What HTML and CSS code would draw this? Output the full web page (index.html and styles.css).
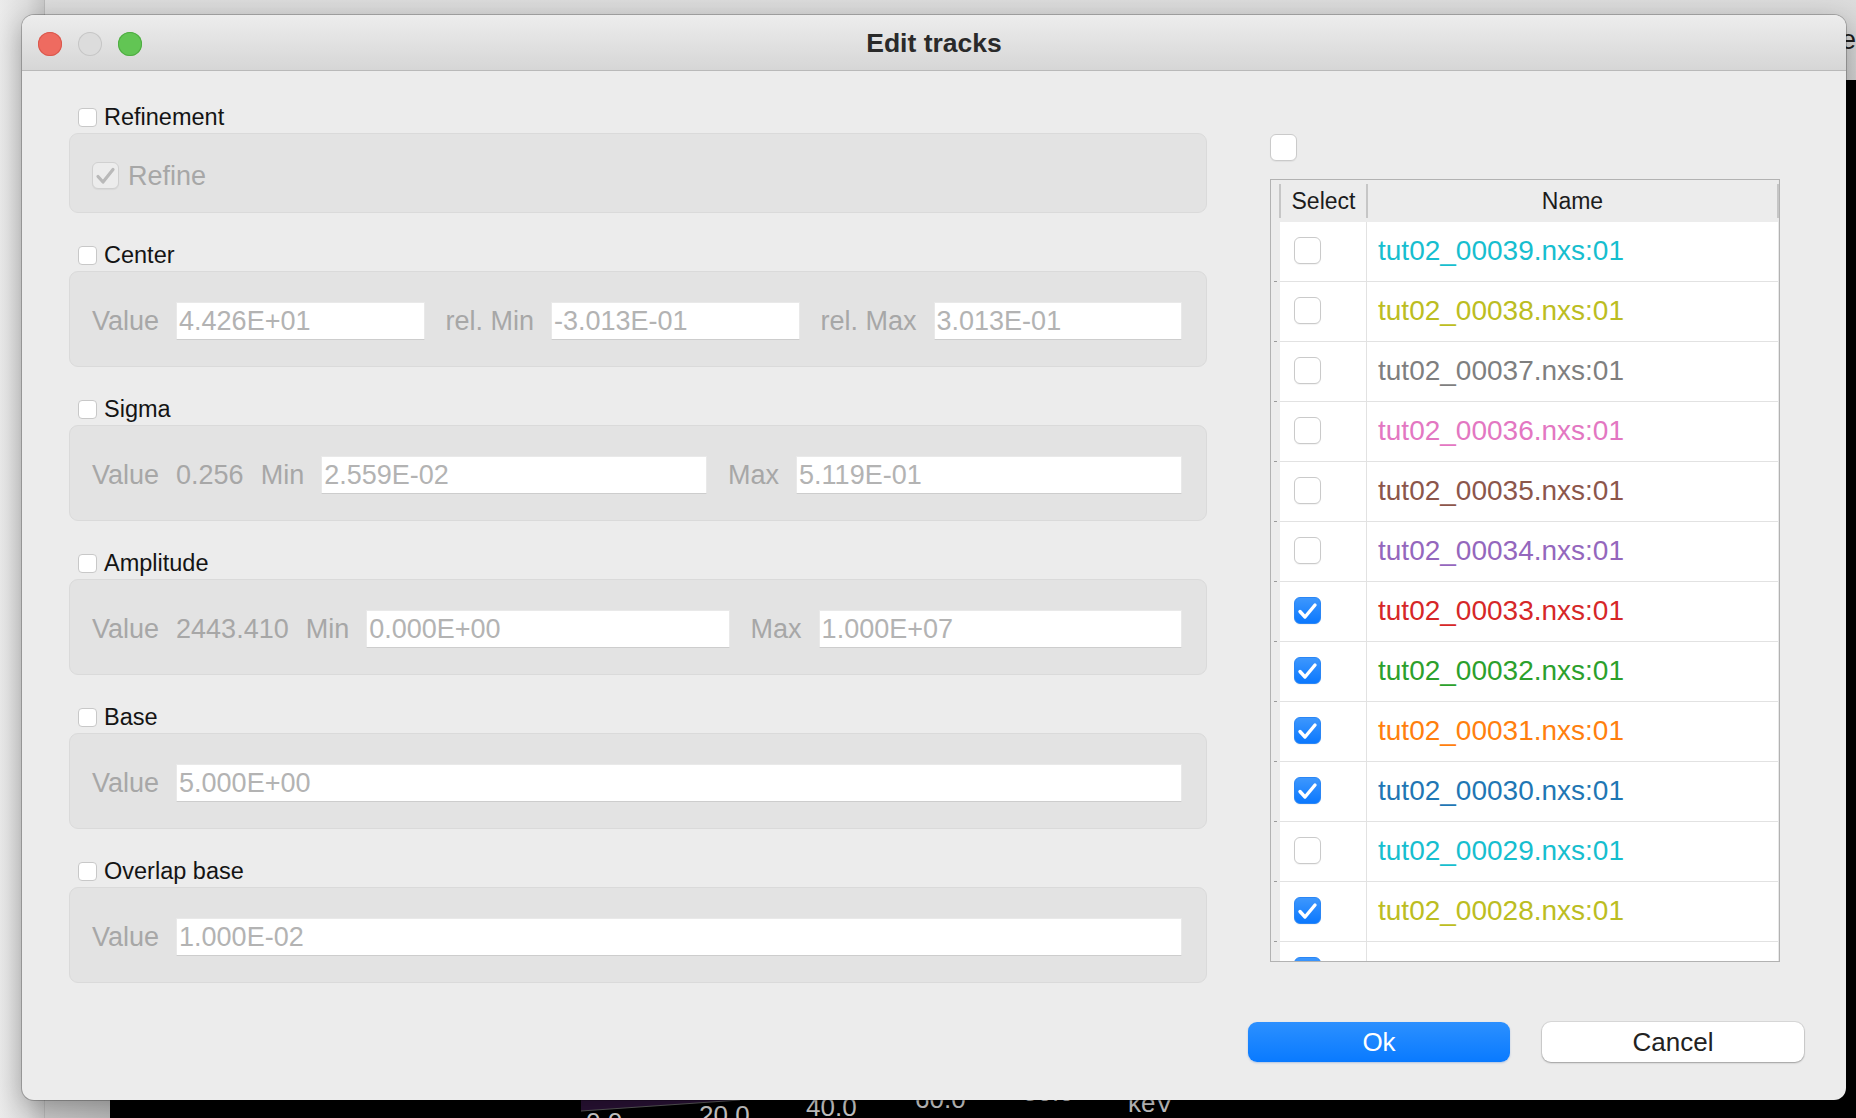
FILE: index.html
```html
<!DOCTYPE html>
<html>
<head>
<meta charset="utf-8">
<title>Edit tracks</title>
<link rel="stylesheet" href="styles.css">
</head>
<body>
<div class="desktop">
  <div class="side-strip"></div>
  <div class="back-window">
    <div class="back-title"><span class="back-title-text">e</span></div>
    <div class="back-body">
      <div class="back-sidebar"></div>
      <div class="plot">
        <svg class="plot-shape" width="160" height="13" viewBox="0 0 160 13"><polygon points="0,0 159,0 0,11" fill="#2a1236"/><line x1="0" y1="11" x2="159" y2="0" stroke="#5a5a5a" stroke-width="1"/></svg>
        <span class="tick tick-0">0.0</span>
        <span class="tick tick-20">20.0</span>
        <span class="tick tick-40">40.0</span>
        <span class="tick tick-60">60.0</span>
        <span class="tick tick-80">80.0</span>
        <span class="tick tick-kev">keV</span>
      </div>
    </div>
  </div>

  <div class="dialog">
    <div class="titlebar">
      <div class="lights">
        <span class="light red"></span>
        <span class="light gray"></span>
        <span class="light green"></span>
      </div>
      <div class="title">Edit tracks</div>
      <div></div>
    </div>

    <div class="content">
      <div class="params">
        <section class="group">
          <div class="group-title"><span class="cb-sm"></span><span>Refinement</span></div>
          <div class="group-box box-refine">
            <div class="refine-row">
              <span class="cb-lg cb-disabled"><svg width="27" height="27" viewBox="0 0 27 27"><path d="M6 14.5 L11 20 L21 7.5" fill="none" stroke="#b9b9b9" stroke-width="3.2" stroke-linecap="round" stroke-linejoin="round"/></svg></span>
              <span class="lbl">Refine</span>
            </div>
          </div>
        </section>

        <section class="group">
          <div class="group-title"><span class="cb-sm"></span><span>Center</span></div>
          <div class="group-box">
            <div class="row">
              <span class="lbl">Value</span>
              <div class="field">4.426E+01</div>
              <span class="lbl">rel. Min</span>
              <div class="field">-3.013E-01</div>
              <span class="lbl">rel. Max</span>
              <div class="field">3.013E-01</div>
            </div>
          </div>
        </section>

        <section class="group">
          <div class="group-title"><span class="cb-sm"></span><span>Sigma</span></div>
          <div class="group-box">
            <div class="row">
              <span class="lbl">Value</span>
              <span class="lbl">0.256</span>
              <span class="lbl">Min</span>
              <div class="field">2.559E-02</div>
              <span class="lbl">Max</span>
              <div class="field">5.119E-01</div>
            </div>
          </div>
        </section>

        <section class="group">
          <div class="group-title"><span class="cb-sm"></span><span>Amplitude</span></div>
          <div class="group-box">
            <div class="row">
              <span class="lbl">Value</span>
              <span class="lbl">2443.410</span>
              <span class="lbl">Min</span>
              <div class="field">0.000E+00</div>
              <span class="lbl">Max</span>
              <div class="field">1.000E+07</div>
            </div>
          </div>
        </section>

        <section class="group">
          <div class="group-title"><span class="cb-sm"></span><span>Base</span></div>
          <div class="group-box">
            <div class="row">
              <span class="lbl">Value</span>
              <div class="field">5.000E+00</div>
            </div>
          </div>
        </section>

        <section class="group">
          <div class="group-title"><span class="cb-sm"></span><span>Overlap base</span></div>
          <div class="group-box">
            <div class="row">
              <span class="lbl">Value</span>
              <div class="field">1.000E-02</div>
            </div>
          </div>
        </section>
      </div>

      <div class="tracks">
        <span class="cb-lg select-all"></span>
        <div class="table">
          <div class="trow thead">
            <div class="vh"></div>
            <div class="hcell">Select</div>
            <div class="hcell hcell-last">Name</div>
          </div>
          <div class="trow"><div class="vh"></div><div class="sel"><span class="cb-lg"></span></div><div class="name c-cyan">tut02_00039.nxs:01</div></div>
          <div class="trow"><div class="vh"></div><div class="sel"><span class="cb-lg"></span></div><div class="name c-olive">tut02_00038.nxs:01</div></div>
          <div class="trow"><div class="vh"></div><div class="sel"><span class="cb-lg"></span></div><div class="name c-gray">tut02_00037.nxs:01</div></div>
          <div class="trow"><div class="vh"></div><div class="sel"><span class="cb-lg"></span></div><div class="name c-pink">tut02_00036.nxs:01</div></div>
          <div class="trow"><div class="vh"></div><div class="sel"><span class="cb-lg"></span></div><div class="name c-brown">tut02_00035.nxs:01</div></div>
          <div class="trow"><div class="vh"></div><div class="sel"><span class="cb-lg"></span></div><div class="name c-purple">tut02_00034.nxs:01</div></div>
          <div class="trow"><div class="vh"></div><div class="sel"><span class="cb-lg cb-on"><svg width="27" height="27" viewBox="0 0 27 27"><path d="M6 14.5 L11 20 L21 8" fill="none" stroke="#fff" stroke-width="3.4" stroke-linecap="round" stroke-linejoin="round"/></svg></span></div><div class="name c-red">tut02_00033.nxs:01</div></div>
          <div class="trow"><div class="vh"></div><div class="sel"><span class="cb-lg cb-on"><svg width="27" height="27" viewBox="0 0 27 27"><path d="M6 14.5 L11 20 L21 8" fill="none" stroke="#fff" stroke-width="3.4" stroke-linecap="round" stroke-linejoin="round"/></svg></span></div><div class="name c-green">tut02_00032.nxs:01</div></div>
          <div class="trow"><div class="vh"></div><div class="sel"><span class="cb-lg cb-on"><svg width="27" height="27" viewBox="0 0 27 27"><path d="M6 14.5 L11 20 L21 8" fill="none" stroke="#fff" stroke-width="3.4" stroke-linecap="round" stroke-linejoin="round"/></svg></span></div><div class="name c-orange">tut02_00031.nxs:01</div></div>
          <div class="trow"><div class="vh"></div><div class="sel"><span class="cb-lg cb-on"><svg width="27" height="27" viewBox="0 0 27 27"><path d="M6 14.5 L11 20 L21 8" fill="none" stroke="#fff" stroke-width="3.4" stroke-linecap="round" stroke-linejoin="round"/></svg></span></div><div class="name c-blue">tut02_00030.nxs:01</div></div>
          <div class="trow"><div class="vh"></div><div class="sel"><span class="cb-lg"></span></div><div class="name c-cyan">tut02_00029.nxs:01</div></div>
          <div class="trow"><div class="vh"></div><div class="sel"><span class="cb-lg cb-on"><svg width="27" height="27" viewBox="0 0 27 27"><path d="M6 14.5 L11 20 L21 8" fill="none" stroke="#fff" stroke-width="3.4" stroke-linecap="round" stroke-linejoin="round"/></svg></span></div><div class="name c-olive">tut02_00028.nxs:01</div></div>
          <div class="trow"><div class="vh"></div><div class="sel"><span class="cb-lg cb-on"><svg width="27" height="27" viewBox="0 0 27 27"><path d="M6 14.5 L11 20 L21 8" fill="none" stroke="#fff" stroke-width="3.4" stroke-linecap="round" stroke-linejoin="round"/></svg></span></div><div class="name c-gray">tut02_00027.nxs:01</div></div>
        </div>
      </div>
    </div>

    <div class="footer">
      <button class="btn btn-primary">Ok</button>
      <button class="btn">Cancel</button>
    </div>
  </div>
</div>
</body>
</html>
```
FILE: styles.css
```css
* { box-sizing: border-box; }
html, body { margin: 0; padding: 0; }
body {
  width: 1856px;
  height: 1118px;
  overflow: hidden;
  font-family: "Liberation Sans", Arial, sans-serif;
  background: #d6d6d6;
}

/* ---------- desktop behind the dialog ---------- */
.desktop {
  position: relative;
  width: 1856px;
  height: 1118px;
  display: flex;
  overflow: hidden;
}
.side-strip {
  width: 45px;
  flex: none;
  background: linear-gradient(90deg, #ebebeb 0%, #dedede 60%, #c9c9c9 100%);
  border-right: 1px solid #b9b9b9;
}
.back-window {
  flex: 1;
  display: flex;
  flex-direction: column;
}
.back-title {
  height: 80px;
  flex: none;
  background: linear-gradient(#dcdcdc, #d2d2d2);
  display: flex;
  justify-content: flex-end;
  align-items: flex-start;
  padding-top: 26px;
}
.back-title-text {
  font-size: 28px;
  line-height: 28px;
  color: #1e1e1e;
}
.back-body {
  flex: 1;
  display: flex;
}
.back-sidebar {
  width: 65px;
  flex: none;
  background: linear-gradient(90deg, #cbcbcb, #bebebe);
}
.plot {
  flex: 1;
  position: relative;
  background: #000;
}
.plot-shape {
  position: absolute;
  left: 471px;
  top: 1020px;
}
.tick {
  position: absolute;
  font-size: 26px;
  line-height: 26px;
  color: #d2d2d2;
}
.tick-0 { left: 476px; top: 1029px; }
.tick-20 { left: 589px; top: 1022px; }
.tick-40 { left: 696px; top: 1014px; }
.tick-60 { left: 805px; top: 1006px; }
.tick-80 { left: 913px; top: 999px; }
.tick-kev { left: 1018px; top: 1010px; }

/* ---------- dialog ---------- */
.dialog {
  position: absolute;
  left: 22px;
  top: 15px;
  width: 1824px;
  height: 1085px;
  border-radius: 12px;
  background: #ececec;
  box-shadow: 0 0 0 1px rgba(0, 0, 0, 0.22), 0 8px 28px rgba(0, 0, 0, 0.3);
  overflow: hidden;
  display: flex;
  flex-direction: column;
  z-index: 2;
}
.titlebar {
  height: 56px;
  flex: none;
  border-bottom: 1px solid #b9b9b9;
  background: linear-gradient(#ededed, #d6d6d6);
  display: grid;
  grid-template-columns: 1fr auto 1fr;
  align-items: center;
}
.lights {
  display: flex;
  gap: 16px;
  padding-left: 16px;
  margin-top: 3px;
}
.light {
  width: 24px;
  height: 24px;
  border-radius: 50%;
}
.light.red { background: #ee6b60; box-shadow: inset 0 0 0 1px #d9584d; }
.light.gray { background: #dcdcdc; box-shadow: inset 0 0 0 1px #c6c6c6; }
.light.green { background: #62c554; box-shadow: inset 0 0 0 1px #4fac42; }
.title {
  font-weight: bold;
  font-size: 26.5px;
  color: #2a2a2a;
  margin-top: 1px;
}

.content {
  flex: 1;
  display: flex;
  padding: 33px 0 0 47px;
}

/* ---------- left parameter groups ---------- */
.params {
  width: 1138px;
  flex: none;
}
.group {
  margin-bottom: 29px;
}
.group-title {
  height: 26px;
  display: flex;
  align-items: center;
  gap: 7px;
  padding-left: 9px;
  margin-bottom: 3px;
  font-size: 23.5px;
  color: #141414;
}
.cb-sm {
  width: 19px;
  height: 19px;
  flex: none;
  background: #fff;
  border: 1px solid #c8c8c8;
  border-radius: 4px;
}
.group-box {
  height: 96px;
  background: #e3e3e3;
  border: 1px solid #dadada;
  border-radius: 9px;
  padding: 30px 24px 0 22px;
}
.group-box.box-refine {
  height: 80px;
  padding-top: 28px;
}
.refine-row {
  display: flex;
  align-items: center;
  gap: 9px;
  height: 27px;
}
.refine-row .lbl { line-height: 27px; margin-top: 2px; }
.row {
  display: flex;
  align-items: center;
  gap: 17px;
  height: 38px;
}
.lbl {
  font-size: 27px;
  line-height: 38px;
  color: #a7a7a7;
  white-space: nowrap;
  flex: none;
}
.field {
  flex: 1;
  height: 38px;
  background: #fff;
  border: 1px solid #e9e9e9;
  border-bottom-color: #cdcdcd;
  font-size: 27px;
  line-height: 36px;
  color: #b3b3b3;
  padding-left: 2px;
  margin-right: 4px;
  white-space: nowrap;
  overflow: hidden;
}
.field:last-child { margin-right: 0; }

/* ---------- checkboxes ---------- */
.cb-lg {
  width: 27px;
  height: 27px;
  flex: none;
  display: block;
  background: #fff;
  border: 1px solid #cacaca;
  border-radius: 6px;
  box-shadow: 0 1px 1px rgba(0, 0, 0, 0.05);
}
.cb-lg svg { display: block; margin: -1px; }
.cb-disabled {
  background: #ececec;
  border-color: #d0d0d0;
}
.cb-on {
  background: linear-gradient(#3d97fd, #0b78fe);
  border: 1px solid #2a86f5;
}

/* ---------- right: tracks table ---------- */
.tracks {
  width: 510px;
  flex: none;
  margin-left: 63px;
  padding-top: 30px;
}
.select-all {
  margin-bottom: 18px;
}
.table {
  height: 783px;
  border: 1px solid #b2b2b2;
  background: #e9e9e9;
  overflow: hidden;
}
.trow {
  display: grid;
  grid-template-columns: 9px 87px 411px;
  height: 60px;
}
.trow.thead { height: 42px; }
.vh {
  background: linear-gradient(#9a9a9a, #9a9a9a) no-repeat 3px 100% / 3px 1px, #ececec;
}
.thead .vh { background: #ececec; }
.hcell {
  position: relative;
  background: #ececec;
  font-size: 23px;
  color: #1c1c1c;
  display: flex;
  align-items: center;
  justify-content: center;
}
.hcell::before {
  content: "";
  position: absolute;
  left: -1px;
  top: 4px;
  bottom: 4px;
  width: 2px;
  background: #c6c6c6;
}
.hcell-last::after {
  content: "";
  position: absolute;
  right: -1px;
  top: 4px;
  bottom: 4px;
  width: 2px;
  background: #c6c6c6;
}
.sel {
  background: #fff;
  border-bottom: 1px solid #e2e2e2;
  border-right: 1px solid #e2e2e2;
  display: flex;
  align-items: center;
  padding-left: 14px;
  padding-bottom: 2px;
}
.name {
  background: #fff;
  border-bottom: 1px solid #e2e2e2;
  display: flex;
  align-items: center;
  padding-left: 11px;
  padding-bottom: 2px;
  font-size: 28px;
  white-space: nowrap;
}
.c-cyan { color: #17becf; }
.c-olive { color: #bcbd22; }
.c-gray { color: #7f7f7f; }
.c-pink { color: #e377c2; }
.c-brown { color: #8c564b; }
.c-purple { color: #9467bd; }
.c-red { color: #d62728; }
.c-green { color: #2ca02c; }
.c-orange { color: #ff7f0e; }
.c-blue { color: #1f77b4; }

/* ---------- footer buttons ---------- */
.footer {
  flex: none;
  display: flex;
  justify-content: flex-end;
  gap: 32px;
  padding: 0 42px 38px 0;
}
.btn {
  width: 262px;
  height: 40px;
  border: none;
  border-radius: 9px;
  background: #fff;
  font-family: "Liberation Sans", Arial, sans-serif;
  font-size: 26px;
  line-height: 40px;
  color: #222;
  box-shadow: 0 0 0 1px rgba(0, 0, 0, 0.08), 0 1px 2px rgba(0, 0, 0, 0.28);
  padding: 0 0 2px 0;
}
.btn-primary {
  background: linear-gradient(#2c90ff, #097aff);
  color: #fff;
  box-shadow: 0 1px 2px rgba(0, 80, 200, 0.25);
}
```
